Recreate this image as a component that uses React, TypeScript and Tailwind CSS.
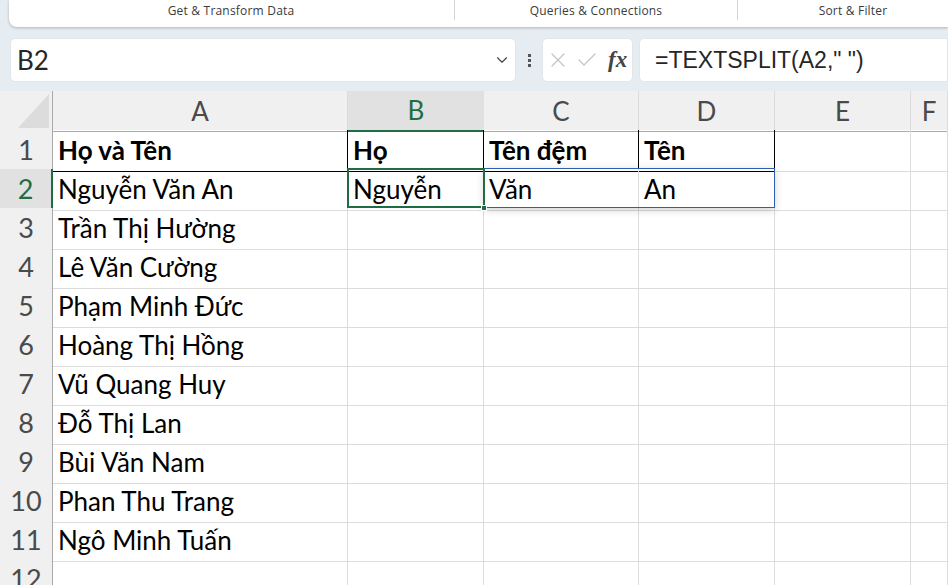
import React from "react";
import { ChevronDown, X, Check } from "lucide-react";

const cols = ["A", "B", "C", "D", "E", "F"];

const rows: string[][] = [
  ["Họ và Tên", "Họ", "Tên đệm", "Tên"],
  ["Nguyễn Văn An", "Nguyễn", "Văn", "An"],
  ["Trần Thị Hường"],
  ["Lê Văn Cường"],
  ["Phạm Minh Đức"],
  ["Hoàng Thị Hồng"],
  ["Vũ Quang Huy"],
  ["Đỗ Thị Lan"],
  ["Bùi Văn Nam"],
  ["Phan Thu Trang"],
  ["Ngô Minh Tuấn"],
  [],
];

const gridCols = "grid grid-cols-[53px_295px_136px_155px_136px_136px_37px]";

export default function App() {
  return (
    <div className="h-[585px] w-[948px] overflow-hidden bg-[#e6edf2] font-['Lato',sans-serif]">
      {/* Ribbon labels */}
      <div className="ml-[9px] flex h-[27px] rounded-bl-[8px] bg-white text-[12px] tracking-[0.2px] text-[#3b3b3b] shadow-[0_1px_3px_rgba(0,0,0,0.25)] font-['Open_Sans',sans-serif]">
        <div className="flex w-[446px] items-center justify-center border-r border-[#d4d4d4] pb-[3px] mb-[7px] pt-[4px] pr-[1px]">Get &amp; Transform Data</div>
        <div className="flex w-[283px] items-center justify-center border-r border-[#d4d4d4] pb-[3px] mb-[7px] pt-[4px]">Queries &amp; Connections</div>
        <div className="flex flex-1 items-center justify-center pb-[3px] mb-[7px] pt-[4px] pl-[20px]">Sort &amp; Filter</div>
      </div>

      {/* Formula bar */}
      <div className="mt-[11px] flex h-[44px] items-stretch pl-[10px]">
        <div className="flex w-[506px] items-center justify-between rounded-[5px] border border-[#e3e6e9] bg-white pl-[6px] pr-[4px] text-[26px] text-[#262626]">
          <span>B2</span>
          <ChevronDown className="h-[18px] w-[18px] text-[#444444]" strokeWidth={1.5} />
        </div>
        <div className="flex w-[26px] flex-col items-center justify-center gap-[2px]">
          <span className="h-[3px] w-[3px] bg-[#555555]" />
          <span className="h-[3px] w-[3px] bg-[#555555]" />
          <span className="h-[3px] w-[3px] bg-[#555555]" />
        </div>
        <div className="flex w-[91px] items-center rounded-[5px] border border-[#e3e6e9] bg-white pl-[3px]">
          <X className="h-[24px] w-[24px] text-[#c4c4c4]" strokeWidth={1.2} />
          <Check className="ml-[5px] h-[24px] w-[24px] text-[#c4c4c4]" strokeWidth={1.2} />
          <span className="ml-[9px] font-['Liberation_Serif',serif] text-[23px] italic font-bold text-[#444444]">fx</span>
        </div>
        <div className="ml-[6px] flex flex-1 items-center rounded-l-[5px] border border-[#e3e6e9] bg-white pl-[15px] text-[23px] text-[#262626] font-['Liberation_Sans',sans-serif]">
          =TEXTSPLIT(A2," ")
        </div>
      </div>

      {/* Sheet */}
      <div className="relative mt-[9px]">
        {/* Column headers */}
        <div className={`${gridCols} h-[39px] bg-[#f0f0f0]`}>
          <div className="flex items-end justify-end border-r border-b border-[#a9a9a9] pr-[3px] pb-[3px]">
            <div className="h-[34px] w-[31px] bg-[#dcdcdc] [clip-path:polygon(100%_0,100%_100%,0_100%)]" />
          </div>
          {cols.map((c) => (
            <div
              key={c}
              className={
                c === "B"
                  ? "flex items-center justify-center border-b-2 border-[#1f6e43] bg-[#e1e1e1] text-[26px] text-[#1f6e43]"
                  : "flex items-center justify-center border-r border-b border-r-[#dcdcdc] border-b-[#a9a9a9] text-[26px] text-[#4a4a4a]"
              }
            >
              {c}
            </div>
          ))}
        </div>

        {/* Rows */}
        {rows.map((row, r) => (
          <div key={r} className={`${gridCols} h-[39px] bg-white`}>
            <div
              className={
                r === 1
                  ? "flex items-center justify-center border-r-2 border-b border-r-[#1f6e43] border-b-[#c8c8c8] bg-[#e1e1e1] text-[27px] text-[#1f6e43]"
                  : "flex items-center justify-center border-r border-b border-r-[#a9a9a9] border-b-[#d4d4d4] bg-[#f0f0f0] text-[27px] text-[#4a4a4a]"
              }
            >
              {r + 1}
            </div>
            {cols.map((c, i) => (
              <div
                key={c}
                className={
                  r === 0 && i < 4
                    ? "flex items-center overflow-visible whitespace-nowrap border-r border-b border-black pl-[5px] text-[26px] font-bold text-black"
                    : "flex items-center overflow-visible whitespace-nowrap border-r border-b border-[#dcdcdc] pl-[5px] text-[26px] text-black"
                }
              >
                {row[i] ?? ""}
              </div>
            ))}
          </div>
        ))}

        {/* Spill range outline */}
        <div className="pointer-events-none absolute left-[484px] top-[77px] h-[40px] w-[291px] border border-[#2f5fb0] shadow-[0_2px_8px_rgba(0,0,0,0.18)]" />
        {/* Active cell */}
        <div className="pointer-events-none absolute left-[347px] top-[77px] h-[40px] w-[138px] border-2 border-[#1f6e43]" />
        <div className="pointer-events-none absolute left-[481px] top-[114px] h-[6px] w-[6px] border border-white bg-[#1f6e43]" />
      </div>
    </div>
  );
}
